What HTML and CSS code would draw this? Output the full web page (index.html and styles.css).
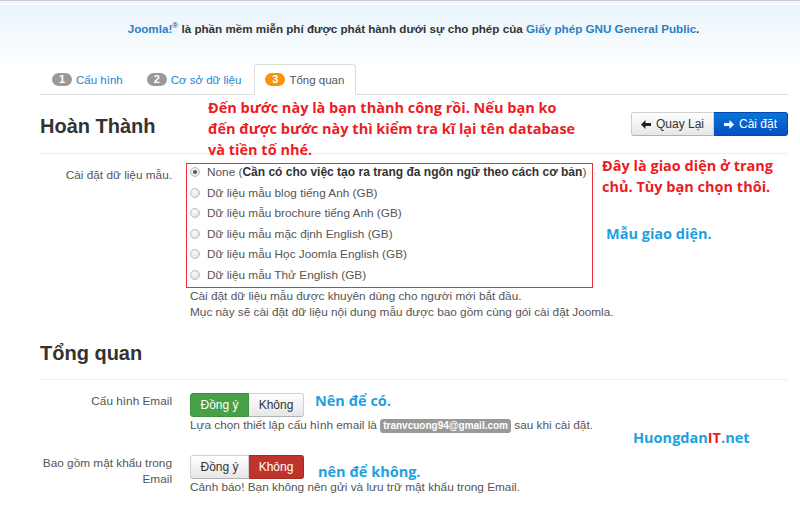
FILE: index.html
```html
<!DOCTYPE html>
<html lang="vi">
<head>
<meta charset="utf-8">
<title>Joomla - Tổng quan</title>
<link rel="stylesheet" href="styles.css">
</head>
<body>
<div class="page">
  <header class="site-header">
    <p class="license"><a class="link" href="#">Joomla!</a><sup>®</sup> là phần mềm miễn phí được phát hành dưới sự cho phép của <a class="link" href="#">Giấy phép GNU General Public</a>.</p>
  </header>

  <main class="main">
    <ul class="tabs">
      <li class="tab"><span class="step">1</span><a class="tab-link" href="#">Cấu hình</a></li>
      <li class="tab"><span class="step">2</span><a class="tab-link" href="#">Cơ sở dữ liệu</a></li>
      <li class="tab active"><span class="step step-warn">3</span><span class="tab-link">Tổng quan</span></li>
    </ul>

    <div class="section-head">
      <h3 class="title">Hoàn Thành</h3>
      <div class="nav-btns">
        <button class="btn btn-default" type="button"><svg class="arrow" width="10" height="9" viewBox="0 0 10 9"><path d="M0 4.5 L4.5 0 L4.5 3 L10 3 L10 6 L4.5 6 L4.5 9 Z" fill="#222"/></svg>Quay Lại</button>
        <button class="btn btn-primary" type="button"><svg class="arrow" width="10" height="9" viewBox="0 0 10 9"><path d="M10 4.5 L5.5 0 L5.5 3 L0 3 L0 6 L5.5 6 L5.5 9 Z" fill="#fff"/></svg>Cài đặt</button>
      </div>
    </div>

    <div class="form-row row-sample">
      <label class="control-label">Cài đặt dữ liệu mẫu.</label>
      <div class="controls">
        <div class="radio-box">
          <div class="radio-row"><span class="radio checked"></span><span>None (<b class="strong">Cần có cho việc tạo ra trang đa ngôn ngữ theo cách cơ bản</b>)</span></div>
          <div class="radio-row"><span class="radio"></span><span>Dữ liệu mẫu blog tiếng Anh (GB)</span></div>
          <div class="radio-row"><span class="radio"></span><span>Dữ liệu mẫu brochure tiếng Anh (GB)</span></div>
          <div class="radio-row"><span class="radio"></span><span>Dữ liệu mẫu mặc định English (GB)</span></div>
          <div class="radio-row"><span class="radio"></span><span>Dữ liệu mẫu Học Joomla English (GB)</span></div>
          <div class="radio-row"><span class="radio"></span><span>Dữ liệu mẫu Thử English (GB)</span></div>
        </div>
        <p class="help">Cài đặt dữ liệu mẫu được khuyên dùng cho người mới bắt đầu.<br>Mục này sẽ cài đặt dữ liệu nội dung mẫu được bao gồm cùng gói cài đặt Joomla.</p>
      </div>
    </div>

    <div class="section-head section-second">
      <h3 class="title">Tổng quan</h3>
    </div>

    <div class="form-row row-email">
      <label class="control-label label-top">Cấu hình Email</label>
      <div class="controls">
        <div class="toggle">
          <button class="btn btn-success" type="button">Đồng ý</button><button class="btn btn-default" type="button">Không</button>
        </div>
        <p class="help">Lựa chọn thiết lập cấu hình email là <span class="pill">tranvcuong94@gmail.com</span> sau khi cài đặt.</p>
      </div>
    </div>

    <div class="form-row row-pass">
      <label class="control-label label-top">Bao gồm mật khẩu trong Email</label>
      <div class="controls">
        <div class="toggle">
          <button class="btn btn-default" type="button">Đồng ý</button><button class="btn btn-danger" type="button">Không</button>
        </div>
        <p class="help">Cảnh báo! Bạn không nên gửi và lưu trữ mật khẩu trong Email.</p>
      </div>
    </div>
  </main>

  <div class="note note-red note-1">Đến bước này là bạn thành công rồi. Nếu bạn ko<br>đến được bước này thì kiểm tra kĩ lại tên database<br>và tiền tố nhé.</div>
  <div class="note note-red note-2">Đây là giao diện ở trang<br>chủ. Tùy bạn chọn thôi.</div>
  <div class="note note-blue note-3">Mẫu giao diện.</div>
  <div class="note note-blue note-4">Nên để có.</div>
  <div class="note note-blue note-5">nên để không.</div>
  <div class="note note-blue note-6">Huongdan<span class="it">IT</span>.net</div>
</div>
</body>
</html>
```

FILE: styles.css
```css
* { box-sizing: border-box; }

html, body {
  margin: 0;
  padding: 0;
}

body {
  width: 800px;
  height: 513px;
  overflow: hidden;
  font-family: "Liberation Sans", Arial, sans-serif;
  font-size: 11.8px;
  color: #555;
  background:
    linear-gradient(to bottom,
      #c9cdd1 0, #c9cdd1 1px,
      #f1f7fb 1px, #f1f7fb 4px,
      #ffffff 4px, #ffffff 5px,
      #e8f4fc 5px, #ffffff 68px) no-repeat;
  background-color: #fff;
}

.page {
  position: relative;
  width: 800px;
  height: 513px;
}

/* header */
.site-header {
  padding: 21px 0 0 27px;
  height: 64px;
}

.license {
  margin: 0;
  text-align: center;
  font-weight: bold;
  font-size: 11.65px;
  line-height: 16px;
  color: #333;
}

.license sup {
  font-size: 8px;
  line-height: 0;
  vertical-align: 5px;
  font-weight: normal;
}

.link {
  color: #2a7fc4;
  text-decoration: none;
}

/* main column */
.main {
  margin: 0 12px 0 40px;
}

/* tabs */
.tabs {
  list-style: none;
  margin: 0;
  padding: 0 0 0 1px;
  display: flex;
  border-bottom: 1px solid #ddd;
  height: 31px;
}

.tab {
  display: flex;
  align-items: center;
  gap: 4px;
  padding: 0 10px;
  margin-right: 2px;
  height: 31px;
  border: 1px solid transparent;
  border-radius: 4px 4px 0 0;
}

.tab.active {
  background: #fff;
  border-color: #ddd #ddd transparent #ddd;
  margin-bottom: -1px;
  padding-right: 11px;
}

.step {
  display: inline-flex;
  align-items: center;
  justify-content: center;
  width: 20px;
  height: 13px;
  border-radius: 7px;
  background: #999;
  color: #fff;
  font-weight: bold;
  font-size: 11px;
  line-height: 13px;
}

.step-warn {
  background: #f89406;
}

.tab-link {
  color: #2384d3;
  text-decoration: none;
  font-size: 11.5px;
}

.tab.active .tab-link {
  color: #555;
}

/* section heading */
.section-head {
  display: flex;
  align-items: center;
  justify-content: space-between;
  padding: 19px 0 15px;
  border-bottom: 1px solid #eee;
}

.section-second {
  margin-top: 2px;
  padding-bottom: 14px;
}

.title {
  margin: 0;
  font-size: 20px;
  line-height: 24px;
  font-weight: bold;
  color: #333;
}

.nav-btns {
  display: flex;
  margin-top: -4px;
}

/* buttons */
.btn {
  display: inline-flex;
  align-items: center;
  justify-content: center;
  gap: 5px;
  height: 24px;
  padding: 0;
  margin: 0;
  font-family: "Liberation Sans", Arial, sans-serif;
  font-size: 12px;
  line-height: 16px;
  white-space: nowrap;
  border: 1px solid #c8c8c8;
  cursor: pointer;
}

.btn-default {
  color: #333;
  background: linear-gradient(#ffffff, #e6e6e6);
  border-color: #d0d0d0 #d0d0d0 #b3b3b3;
}

.btn-primary {
  color: #fff;
  background: linear-gradient(#0a74d6, #0450c4);
  border-color: #0448b0;
}

.btn-success {
  color: #fff;
  background: #47a146;
  border-color: #3f913e;
}

.btn-danger {
  color: #fff;
  background: #be342d;
  border-color: #a52b25;
}

.nav-btns .btn:first-child {
  width: 83px;
  border-radius: 3px 0 0 3px;
}

.nav-btns .btn:last-child {
  width: 74px;
  border-radius: 0 3px 3px 0;
  border-left: 0;
}

.arrow {
  flex: none;
}

/* form rows */
.form-row {
  display: grid;
  grid-template-columns: 132px 1fr;
  column-gap: 18px;
}

.control-label {
  text-align: right;
  color: #555;
  line-height: 16px;
  padding-top: 4px;
}

.label-top {
  padding-top: 0;
}

.row-sample {
  margin-top: 9px;
}

.radio-box {
  margin-left: -4px;
  width: 407px;
  border: 1px solid #e8313a;
  padding: 0 3px;
}

.radio-row {
  display: flex;
  align-items: flex-start;
  gap: 7px;
  height: 20.5px;
  line-height: 16px;
  color: #555;
}

.radio {
  flex: none;
  width: 10px;
  height: 10px;
  margin-top: 3px;
  border-radius: 50%;
  border: 1px solid #bdbdbd;
  background: radial-gradient(circle at 40% 35%, #fafafa 0, #e2e2e2 80%);
  position: relative;
}

.radio.checked::after {
  content: "";
  position: absolute;
  left: 2px;
  top: 2px;
  width: 4px;
  height: 4px;
  border-radius: 50%;
  background: #555;
}

.strong {
  color: #333;
  font-size: 12px;
}

.help {
  margin: 0;
  line-height: 16px;
  color: #555;
}

.row-email {
  margin-top: 13px;
}

.row-pass {
  margin-top: 22px;
}

.toggle {
  display: flex;
  height: 24px;
}

.toggle .btn:first-child {
  width: 59px;
  border-radius: 3px 0 0 3px;
}

.toggle .btn:last-child {
  width: 55px;
  border-radius: 0 3px 3px 0;
  border-left: 0;
}

.pill {
  display: inline-block;
  background: #999;
  color: #fff;
  font-weight: bold;
  font-size: 10px;
  line-height: 14px;
  padding: 0 3px;
  border-radius: 3px;
}

/* annotations drawn over the screenshot */
.note {
  position: absolute;
  font-family: "Open Sans", "Noto Sans", sans-serif;
  font-weight: bold;
  font-size: 14.5px;
  line-height: 21px;
  white-space: nowrap;
}

.note-red { color: #ec1c24; }
.note-blue { color: #1d9fe2; }
.it { color: #ec1c24; }

.note-1 { left: 208px; top: 97px; }
.note-2 { left: 602px; top: 155px; }
.note-3 { left: 606px; top: 223px; }
.note-4 { left: 315px; top: 390px; }
.note-5 { left: 318px; top: 461px; }
.note-6 { left: 633px; top: 427px; }
```
